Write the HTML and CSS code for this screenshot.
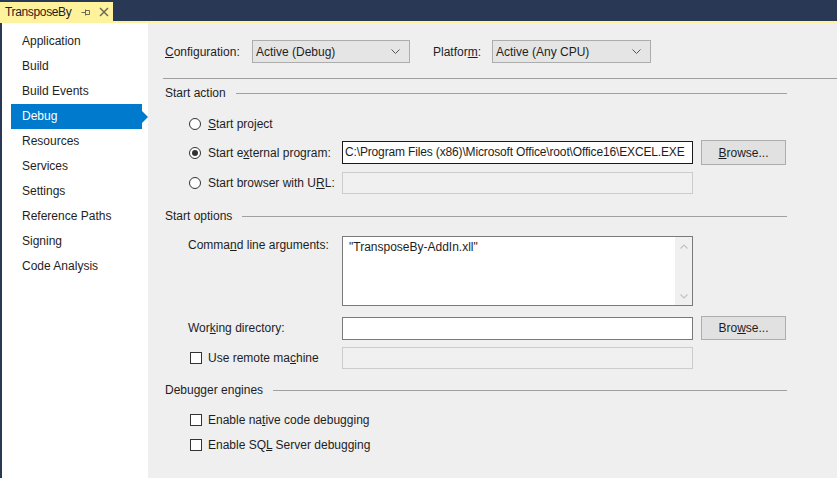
FILE: index.html
```html
<!DOCTYPE html>
<html>
<head>
<meta charset="utf-8">
<link rel="stylesheet" href="styles.css">
</head>
<body>
<div class="titlebar">
  <div class="tab">
    <span class="tab-title">TransposeBy</span>
    <svg class="tab-icon pin" width="10" height="10" viewBox="0 0 10 10"><path d="M0.5 5.5H4.5M4.5 2.5V8.5M4.5 3.5H8.5V7.5H4.5" fill="none" stroke="#6b6a55" stroke-width="1"/></svg>
    <svg class="tab-icon close" width="10" height="10" viewBox="0 0 10 10"><path d="M1 1L9 9M9 1L1 9" fill="none" stroke="#6b6a55" stroke-width="1.5"/></svg>
  </div>
</div>
<div class="accent"></div>
<div class="main">
  <nav class="nav">
    <div class="nav-item">Application</div>
    <div class="nav-item">Build</div>
    <div class="nav-item">Build Events</div>
    <div class="nav-item selected">Debug</div>
    <div class="nav-item">Resources</div>
    <div class="nav-item">Services</div>
    <div class="nav-item">Settings</div>
    <div class="nav-item">Reference Paths</div>
    <div class="nav-item">Signing</div>
    <div class="nav-item">Code Analysis</div>
  </nav>
  <div class="content">
    <div class="config-row">
      <span class="config-label"><u>C</u>onfiguration:</span>
      <div class="select"><span>Active (Debug)</span><svg class="chev" width="9" height="5" viewBox="0 0 9 5"><path d="M0.5 0.5L4.5 4.5L8.5 0.5" fill="none" stroke="#555" stroke-width="1"/></svg></div>
      <span class="platform-label">Platfor<u>m</u>:</span>
      <div class="select"><span>Active (Any CPU)</span><svg class="chev" width="9" height="5" viewBox="0 0 9 5"><path d="M0.5 0.5L4.5 4.5L8.5 0.5" fill="none" stroke="#555" stroke-width="1"/></svg></div>
    </div>
    <div class="separator"></div>

    <div class="section section-action"><span>Start action</span><div class="rule"></div></div>
    <div class="row row-project">
      <span class="radio"></span><span class="row-label"><u>S</u>tart project</span>
    </div>
    <div class="row row-external">
      <span class="radio checked"></span><span class="row-label radio-label">Start e<u>x</u>ternal program:</span>
      <div class="textbox focused">C:\Program Files (x86)\Microsoft Office\root\Office16\EXCEL.EXE</div>
      <div class="button"><span><u>B</u>rowse...</span></div>
    </div>
    <div class="row row-url">
      <span class="radio"></span><span class="row-label radio-label">Start browser with U<u>R</u>L:</span>
      <div class="textbox disabled"></div>
    </div>

    <div class="section section-options"><span>Start options</span><div class="rule"></div></div>
    <div class="row row-args">
      <span class="row-label plain-label">Comma<u>n</u>d line arguments:</span>
      <div class="textarea">
        <span class="textarea-text">"TransposeBy-AddIn.xll"</span>
        <div class="scrollbar">
          <svg class="scroll" width="8" height="5" viewBox="0 0 8 5"><path d="M0.5 4.5L4 1L7.5 4.5" fill="none" stroke="#c2c2c2" stroke-width="1.2"/></svg>
          <svg class="scroll" width="8" height="5" viewBox="0 0 8 5"><path d="M0.5 0.5L4 4L7.5 0.5" fill="none" stroke="#c2c2c2" stroke-width="1.2"/></svg>
        </div>
      </div>
    </div>
    <div class="row row-workdir">
      <span class="row-label plain-label">Wor<u>k</u>ing directory:</span>
      <div class="textbox"></div>
      <div class="button"><span>Bro<u>w</u>se...</span></div>
    </div>
    <div class="row row-remote">
      <span class="checkbox"></span><span class="row-label radio-label">Use remote ma<u>c</u>hine</span>
      <div class="textbox disabled"></div>
    </div>

    <div class="section section-engines"><span>Debugger engines</span><div class="rule"></div></div>
    <div class="row row-native">
      <span class="checkbox"></span><span class="row-label">Enable na<u>t</u>ive code debugging</span>
    </div>
    <div class="row row-sql">
      <span class="checkbox"></span><span class="row-label">Enable SQ<u>L</u> Server debugging</span>
    </div>
  </div>
</div>
</body>
</html>
```

FILE: styles.css
```css
* { box-sizing: border-box; }
html, body { margin: 0; padding: 0; }
body {
  width: 837px;
  height: 478px;
  overflow: hidden;
  font-family: "Liberation Sans", Arial, sans-serif;
  font-size: 12px;
  color: #1e1e1e;
  background: #efefef;
}
u { text-decoration: underline; text-underline-offset: 1px; }

.titlebar {
  height: 21px;
  background: #293955;
  padding-top: 2px;
}
.tab {
  width: 113px;
  height: 19px;
  background: #fff29d;
  display: flex;
  align-items: center;
  padding-left: 5px;
}
.tab-title {
  color: #1e1e1e;
  line-height: 19px;
  width: 76px;
  letter-spacing: -0.35px;
  padding-top: 1px;
}
.tab-icon { display: block; }
.pin { margin-left: 0; }
.close { margin-left: 8px; }
.accent { height: 2px; background: #fff29d; }

.main {
  display: flex;
  height: 455px;
}
.nav {
  width: 148px;
  flex: none;
  background: #ffffff;
  border-left: 2px solid #293955;
  padding-top: 6px;
  position: relative;
  z-index: 1;
}
.nav-item {
  height: 25px;
  line-height: 25px;
  margin-left: 9px;
  width: 131px;
  padding-left: 11px;
  color: #1e1e1e;
  position: relative;
}
.nav-item.selected {
  background: #007acc;
  color: #ffffff;
}
.nav-item.selected::after {
  content: "";
  position: absolute;
  right: -6px;
  top: 6.5px;
  border-left: 6px solid #007acc;
  border-top: 6px solid transparent;
  border-bottom: 6px solid transparent;
}

.content {
  flex: 1;
  background: #efefef;
  padding-left: 17px;
  padding-right: 50px;
}

.config-row {
  display: flex;
  align-items: center;
  margin-top: 17px;
  height: 23px;
}
.config-label { width: 87px; }
.platform-label { width: 59px; margin-left: 23px; }
.select {
  width: 158px;
  height: 23px;
  border: 1px solid #acacac;
  background: #e5e5e5;
  display: flex;
  align-items: center;
  justify-content: space-between;
  padding-left: 3px;
  padding-right: 9px;
}
.select:last-child { width: 159px; }
.chev { display: block; }

.separator {
  height: 1px;
  background: #a0a0a0;
  margin-top: 15px;
  margin-left: -2px;
  margin-right: -50px;
}

.section {
  display: flex;
  align-items: center;
  height: 16px;
}
.section .rule {
  flex: 1;
  height: 1px;
  background: #a0a0a0;
  margin-left: 10px;
}
.section-action { margin-top: 6px; }
.section-options { margin-top: 14px; }
.section-engines { margin-top: 13px; }

.row {
  display: flex;
  align-items: center;
  padding-left: 24px;
}
.row-label { white-space: nowrap; }
.radio-label { width: 134px; }
.plain-label { width: 154px; margin-left: -1px; }

.radio {
  width: 12px;
  height: 12px;
  border: 1px solid #333333;
  border-radius: 50%;
  background: #ffffff;
  margin-right: 7px;
  position: relative;
  flex: none;
}
.radio.checked::after {
  content: "";
  position: absolute;
  left: 2px;
  top: 2px;
  width: 6px;
  height: 6px;
  border-radius: 50%;
  background: #333333;
}
.checkbox {
  width: 12px;
  height: 12px;
  border: 1px solid #333333;
  background: #ffffff;
  margin-left: 1px;
  margin-right: 6px;
  flex: none;
}

.textbox {
  width: 351px;
  height: 22px;
  border: 1px solid #7a7a7a;
  background: #ffffff;
  line-height: 20px;
  padding-left: 2px;
  white-space: nowrap;
  overflow: hidden;
}
.textbox.focused {
  border-color: #1a1a1a;
  height: 23px;
  line-height: 21px;
  letter-spacing: -0.15px;
}
.textbox.disabled { border-color: #cccccc; background: #f0f0f0; }

.button {
  width: 85px;
  height: 25px;
  margin-left: 8px;
  border: 1px solid #adadad;
  background: #e1e1e1;
  display: flex;
  align-items: center;
  justify-content: center;
}

.textarea {
  width: 351px;
  height: 70px;
  border: 1px solid #7a7a7a;
  background: #ffffff;
  display: flex;
  justify-content: space-between;
}
.textarea-text { padding: 3px 0 0 6px; }
.scrollbar {
  width: 17px;
  background: #f0f0f0;
  display: flex;
  flex-direction: column;
  justify-content: space-between;
  align-items: center;
  padding: 7px 0 6px;
}
.scroll { display: block; }

.row-project { height: 22px; margin-top: 12px; }
.row-external { height: 25px; margin-top: 5px; }
.row-url { height: 22px; margin-top: 7px; }
.row-args { margin-top: 12px; align-items: flex-start; }
.row-args .row-label { margin-top: 1px; line-height: 16px; }
.row-workdir { height: 24px; margin-top: 10px; }
.row-workdir .textbox { height: 23px; }
.row-workdir .button { height: 24px; }
.row-remote { height: 22px; margin-top: 7px; }
.row-native { height: 16px; margin-top: 14px; }
.row-sql { height: 16px; margin-top: 9px; }
```
